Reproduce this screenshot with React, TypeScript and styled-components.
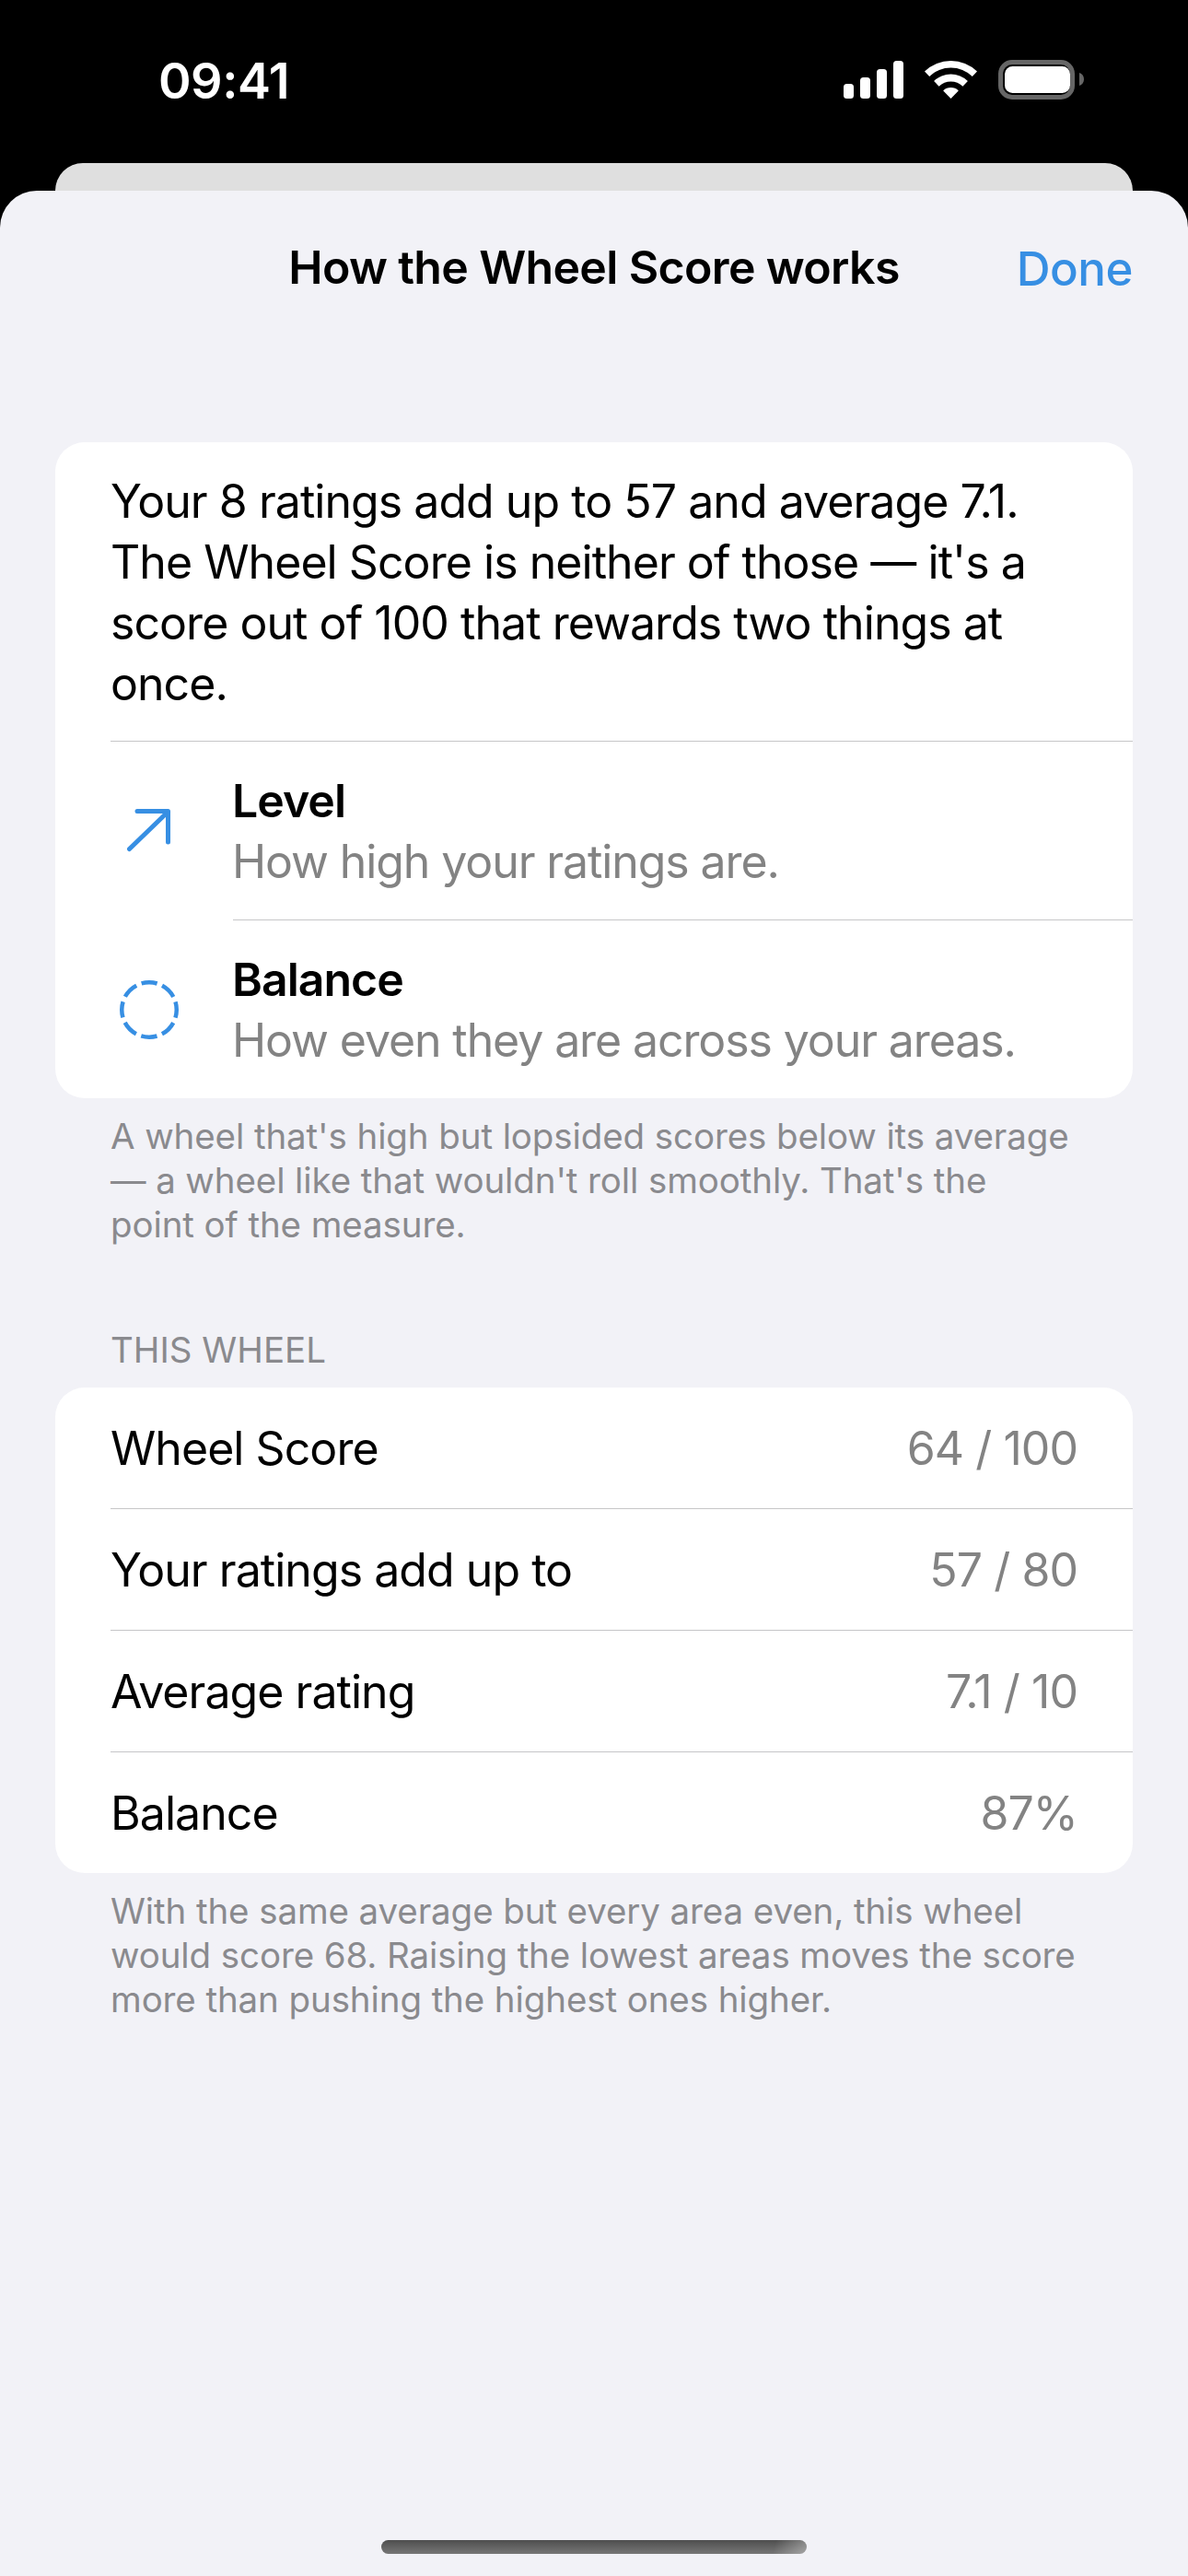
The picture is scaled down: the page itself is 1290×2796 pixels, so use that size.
import React from "react";
import styled, { createGlobalStyle } from "styled-components";

const Global = createGlobalStyle`
  html, body { margin: 0; padding: 0; background: #000; }
  body { font-family: Inter, "Liberation Sans", sans-serif; -webkit-font-smoothing: antialiased; }
`;

const Screen = styled.div`
  width: 1290px;
  height: 2796px;
  background: #000;
  display: flex;
  flex-direction: column;
  overflow: hidden;
`;

const StatusBar = styled.div`
  height: 177px;
  flex: none;
  box-sizing: border-box;
  padding: 58px 113px 0 172px;
  display: flex;
  justify-content: space-between;
  align-items: flex-start;
`;

const Time = styled.div`
  color: #fff;
  font-size: 54px;
  line-height: 60px;
  font-weight: 600;
  letter-spacing: -0.5px;
`;

const StatusIcons = styled.svg`
  display: block;
  margin-top: 7px;
`;

const BackCard = styled.div`
  flex: none;
  height: 30px;
  margin: 0 60px;
  background: #dfdfdf;
  border-radius: 34px 34px 0 0;
`;

const Sheet = styled.div`
  flex: 1;
  background: #f2f2f7;
  border-radius: 40px 40px 0 0;
  display: flex;
  flex-direction: column;
  position: relative;
`;

const NavBar = styled.div`
  height: 170px;
  flex: none;
  box-sizing: border-box;
  padding: 0 60px 4px;
  position: relative;
  display: flex;
  justify-content: flex-end;
  align-items: center;
`;

const Title = styled.div`
  position: absolute;
  left: 0;
  right: 0;
  text-align: center;
  font-size: 50px;
  font-weight: 600;
  color: #000;
  letter-spacing: -0.65px;
`;

const Done = styled.div`
  margin-top: 2px;
  font-size: 51px;
  font-weight: 500;
  color: #378fe3;
  letter-spacing: -0.5px;
`;

const Content = styled.div`
  padding: 103px 60px 0;
  display: flex;
  flex-direction: column;
`;

const Card = styled.div`
  background: #fff;
  border-radius: 32px;
  overflow: hidden;
`;

const Intro = styled.div`
  padding: 31px 60px 29px;
  font-size: 50px;
  line-height: 66px;
  color: #000;
  letter-spacing: -0.95px;
`;

const Divider = styled.div<{ $inset: number }>`
  height: 1px;
  background: #c6c6c8;
  margin-left: ${(p) => p.$inset}px;
`;

const FeatureRow = styled.div`
  display: flex;
  align-items: center;
  height: 193px;
`;

const FeatureIcon = styled.div`
  width: 193px;
  flex: none;
  display: flex;
  justify-content: center;
  padding-left: 11px;
  box-sizing: border-box;
`;

const FeatureText = styled.div`
  display: flex;
  flex-direction: column;
  margin-left: -1px;
`;

const FeatureName = styled.div`
  font-size: 50px;
  line-height: 66px;
  font-weight: 600;
  color: #000;
  letter-spacing: -1px;
`;

const FeatureDesc = styled.div`
  font-size: 50px;
  line-height: 66px;
  color: #838383;
  letter-spacing: -1.1px;
`;

const Footnote = styled.div`
  padding: 17px 60px 0;
  font-size: 38.5px;
  line-height: 48px;
  color: #8a8a8e;
  letter-spacing: -0.1px;
`;

const SectionLabel = styled.div`
  margin-top: 88px;
  padding: 0 60px 17px;
  font-size: 38.5px;
  line-height: 48px;
  color: #8a8a8e;
`;

const StatRow = styled.div`
  height: 131px;
  display: flex;
  justify-content: space-between;
  align-items: center;
  padding: 0 60px;
  font-size: 50px;
  letter-spacing: -0.95px;
  color: #000;
`;

const StatValue = styled.span`
  color: #838383;
`;

const HomeBar = styled.div`
  position: absolute;
  left: 414px;
  bottom: 24px;
  width: 462px;
  height: 15px;
  border-radius: 8px;
  background: linear-gradient(105deg, transparent 92%, rgba(255, 255, 255, 0.35)),
    linear-gradient(180deg, #4e4e4e, #777);
`;

const stats = [
  ["Wheel Score", "64 / 100"],
  ["Your ratings add up to", "57 / 80"],
  ["Average rating", "7.1 / 10"],
  ["Balance", "87%"],
];

export default function App() {
  return (
    <Screen>
      <Global />
      <StatusBar>
        <Time>09:41</Time>
        <StatusIcons width="261" height="43" viewBox="0 0 261 43" fill="none">
          <rect x="0" y="26" width="11" height="16" rx="3.5" fill="#fff" />
          <rect x="18" y="19" width="11" height="23" rx="3.5" fill="#fff" />
          <rect x="36" y="10" width="11" height="32" rx="3.5" fill="#fff" />
          <rect x="54" y="1" width="11" height="41" rx="3.5" fill="#fff" />
          <g transform="translate(88 1)" fill="#fff">
            <path d="M0 11.5 A41 41 0 0 1 57 11.5 L51.8 16.9 A33.5 33.5 0 0 0 5.2 16.9 Z" />
            <path d="M10.1 21.9 A26.5 26.5 0 0 1 46.9 21.9 L41.4 27.7 A18.5 18.5 0 0 0 15.6 27.7 Z" />
            <path d="M20.2 32.4 A12 12 0 0 1 36.8 32.4 L28.5 41 Z" />
          </g>
          <rect x="170.5" y="2.5" width="78" height="38" rx="12.5" stroke="#666" strokeWidth="5" />
          <rect x="175" y="7" width="71" height="29" rx="8.5" fill="#fff" />
          <path d="M256 14 C259 15 261 17.5 261 21 C261 24.5 259 27 256 28 Z" fill="#666" />
        </StatusIcons>
      </StatusBar>
      <BackCard />
      <Sheet>
        <NavBar>
          <Title>How the Wheel Score works</Title>
          <Done>Done</Done>
        </NavBar>
        <Content>
          <Card>
            <Intro>
              Your 8 ratings add up to 57 and average 7.1. The Wheel Score is neither of those — it's a score out of 100 that rewards two things at once.
            </Intro>
            <Divider $inset={60} />
            <FeatureRow>
              <FeatureIcon>
                <svg width="48" height="47" viewBox="0 0 48 47" fill="none" stroke="#378fe3" strokeWidth="5" strokeLinecap="round" strokeLinejoin="round">
                  <path d="M2.5 43.5 L44.5 3 M11 2.5 H44.5 V36" />
                </svg>
              </FeatureIcon>
              <FeatureText>
                <FeatureName>Level</FeatureName>
                <FeatureDesc>How high your ratings are.</FeatureDesc>
              </FeatureText>
            </FeatureRow>
            <Divider $inset={193} />
            <FeatureRow>
              <FeatureIcon>
                <svg width="64" height="64" viewBox="0 0 64 64" fill="none" stroke="#378fe3" strokeWidth="4.5">
                  <circle cx="32" cy="32" r="29.75" strokeDasharray="17.5 5.86" strokeDashoffset="8.75" transform="rotate(-90 32 32)" />
                </svg>
              </FeatureIcon>
              <FeatureText>
                <FeatureName>Balance</FeatureName>
                <FeatureDesc>How even they are across your areas.</FeatureDesc>
              </FeatureText>
            </FeatureRow>
          </Card>
          <Footnote>
            A wheel that's high but lopsided scores below its average — a wheel like that wouldn't roll smoothly. That's the point of the measure.
          </Footnote>
          <SectionLabel>THIS WHEEL</SectionLabel>
          <Card>
            {stats.map(([k, v], i) => (
              <React.Fragment key={k}>
                {i > 0 && <Divider $inset={60} />}
                <StatRow>
                  <span>{k}</span>
                  <StatValue>{v}</StatValue>
                </StatRow>
              </React.Fragment>
            ))}
          </Card>
          <Footnote>
            With the same average but every area even, this wheel would score 68. Raising the lowest areas moves the score more than pushing the highest ones higher.
          </Footnote>
        </Content>
        <HomeBar />
      </Sheet>
    </Screen>
  );
}
